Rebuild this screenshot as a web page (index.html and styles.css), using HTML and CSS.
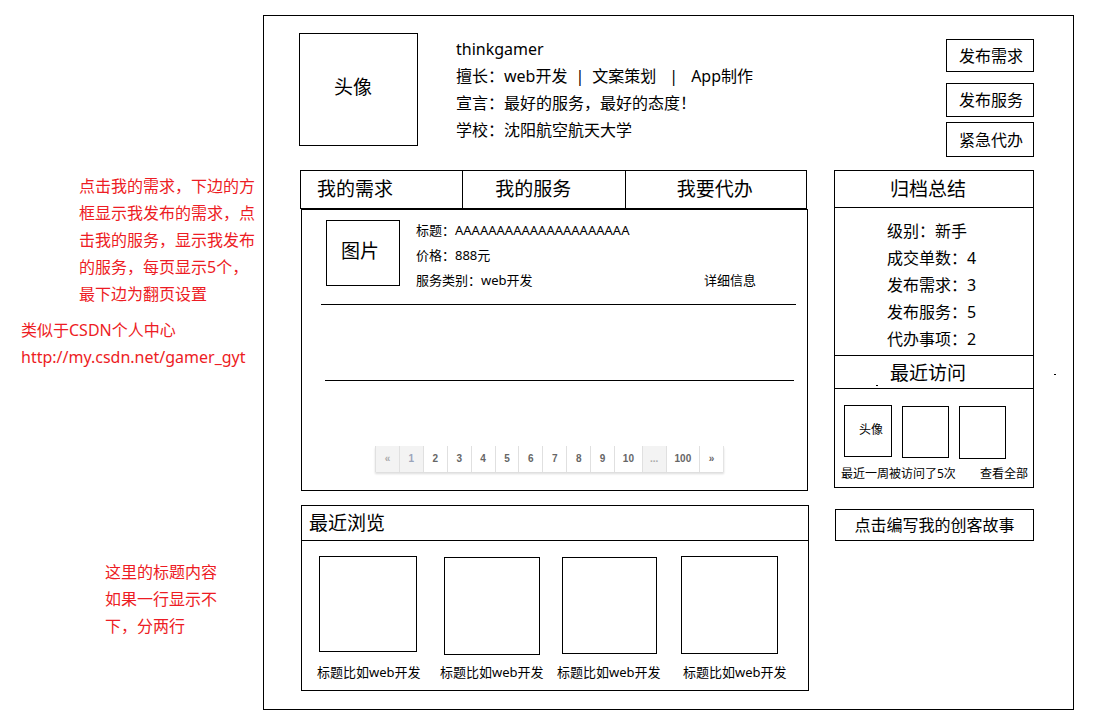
FILE: index.html
```html
<!DOCTYPE html>
<html lang="zh-CN">
<head>
<meta charset="utf-8">
<title>个人中心</title>
<link rel="stylesheet" href="styles.css">
</head>
<body>
<div class="page">
  <aside class="notes">
    <p class="note note-tabs">点击我的需求，下边的方框显示我发布的需求，点击我的服务，显示我发布的服务，每页显示5个，最下边为翻页设置</p>
    <p class="note note-link">类似于CSDN个人中心<br><a href="http://my.csdn.net/gamer_gyt">http://my.csdn.net/gamer_gyt</a></p>
    <p class="note note-title">这里的标题内容如果一行显示不下，分两行</p>
  </aside>
  <div class="frame">
    <header class="profile">
      <div class="avatar">头像</div>
      <div class="info">
        <p>thinkgamer</p>
        <p>擅长：web开发<span class="bar">|</span>文案策划<span class="bar bar-wide">|</span>App制作</p>
        <p>宣言：最好的服务，最好的态度！</p>
        <p>学校：沈阳航空航天大学</p>
      </div>
      <div class="actions">
        <button class="action action-first" type="button">发布需求</button>
        <button class="action" type="button">发布服务</button>
        <button class="action action-last" type="button">紧急代办</button>
      </div>
    </header>
    <div class="columns">
      <main class="main">
        <nav class="tabs">
          <button class="tab tab-needs" type="button">我的需求</button>
          <button class="tab tab-services" type="button">我的服务</button>
          <button class="tab tab-todo" type="button">我要代办</button>
        </nav>
        <section class="panel">
          <article class="item">
            <div class="picture">图片</div>
            <div class="item-text">
              <p>标题：AAAAAAAAAAAAAAAAAAAAA</p>
              <p>价格：888元</p>
              <p>服务类别：web开发</p>
            </div>
            <a class="detail" href="#detail">详细信息</a>
          </article>
          <div class="item-empty"></div>
          <nav class="pager" aria-label="翻页">
            <button class="pg off" type="button">«</button>
            <button class="pg off current" type="button">1</button>
            <button class="pg" type="button">2</button>
            <button class="pg" type="button">3</button>
            <button class="pg" type="button">4</button>
            <button class="pg" type="button">5</button>
            <button class="pg" type="button">6</button>
            <button class="pg" type="button">7</button>
            <button class="pg" type="button">8</button>
            <button class="pg" type="button">9</button>
            <button class="pg pg-ten" type="button">10</button>
            <button class="pg off" type="button">...</button>
            <button class="pg pg-hundred" type="button">100</button>
            <button class="pg" type="button">»</button>
          </nav>
        </section>
        <section class="recent">
          <h2 class="recent-title">最近浏览</h2>
          <div class="cards">
            <figure class="card"><div class="thumb thumb-a"></div><figcaption>标题比如web开发</figcaption></figure>
            <figure class="card"><div class="thumb thumb-b"></div><figcaption>标题比如web开发</figcaption></figure>
            <figure class="card"><div class="thumb thumb-c"></div><figcaption>标题比如web开发</figcaption></figure>
            <figure class="card"><div class="thumb thumb-d"></div><figcaption class="inset">标题比如web开发</figcaption></figure>
          </div>
        </section>
      </main>
      <aside class="side">
        <section class="summary">
          <h2 class="side-title">归档总结</h2>
          <div class="stats">
            <p>级别：新手</p>
            <p>成交单数：4</p>
            <p>发布需求：3</p>
            <p>发布服务：5</p>
            <p>代办事项：2</p>
          </div>
          <h2 class="side-title visits-title">最近访问<span class="dot dot-inner"></span></h2>
          <div class="visitors">
            <div class="visitor visitor-named">头像</div>
            <div class="visitor"></div>
            <div class="visitor visitor-tall"></div>
          </div>
          <div class="visit-foot"><span>最近一周被访问了5次</span><a href="#all">查看全部</a></div>
        </section>
        <button class="story" type="button">点击编写我的创客故事</button>
      </aside>
    </div>
    <span class="dot dot-outer"></span>
  </div>
</div>
</body>
</html>
```
FILE: styles.css
```css
* { box-sizing: border-box; }
body {
  margin: 0;
  background: #fff;
  color: #000;
  font: 16px/27px "Noto Sans", "Noto Sans CJK SC", sans-serif;
}
p, h2, figure { margin: 0; }
h2 { font-weight: 400; }
a { color: inherit; text-decoration: none; }
button {
  margin: 0;
  padding: 0;
  border: 1px solid #000;
  border-radius: 0;
  background: #fff;
  color: inherit;
  font: inherit;
  cursor: pointer;
}
.page {
  display: grid;
  grid-template-columns: 263px minmax(0, 1fr);
  padding: 15px 24px 10px 0;
}

/* Red annotations */
.notes { padding-top: 158px; color: #ed1c24; }
.note-tabs { width: 177px; margin-left: 79px; }
.note-link { margin: 9px 0 0 21px; }
.note-title { width: 113px; margin: 188px 0 0 105px; }

.frame {
  position: relative;
  border: 1px solid #000;
  padding: 17px 39px 18px 35px;
}

/* Profile header */
.profile { display: flex; align-items: flex-start; margin-bottom: 13px; }
.avatar {
  width: 119px;
  height: 113px;
  border: 1px solid #000;
  padding: 40px 0 0 34px;
  font-size: 19px;
}
.info { flex: 1; margin-left: 38px; padding-top: 3px; white-space: nowrap; }
.bar { margin: 0 8px; }
.bar-wide { margin: 0 13px; }
.actions {
  display: grid;
  grid-template-rows: 44px 39px 35px;
  align-items: start;
  width: 88px;
  padding-top: 6px;
}
.action { height: 34px; padding-left: 12px; line-height: 30px; text-align: left; }
.action-first { height: 33px; }
.action-last { height: 35px; }

.columns {
  display: grid;
  grid-template-columns: minmax(0, 1fr) 200px;
  column-gap: 25px;
  align-items: start;
  padding-left: 1px;
}

/* Tabs and list */
.tabs {
  display: grid;
  grid-template-columns: 162fr 163fr 182fr;
  height: 39px;
  margin-right: 2px;
  border: 1px solid #000;
}
.tab { border-width: 0 0 0 1px; text-align: left; font-size: 19px; }
.tab-needs { border-left: 0; padding-left: 16px; }
.tab-services { padding-left: 32px; }
.tab-todo { padding-left: 51px; }
.panel { margin: 0 1px; border: 1px solid #000; padding-bottom: 18px; }
.item {
  display: flex;
  margin: 0 11px 0 19px;
  padding: 8px 40px 11px 5px;
  border-bottom: 1px solid #000;
  font-size: 13px;
  line-height: 25px;
}
.picture {
  width: 74px;
  height: 66px;
  margin-top: 2px;
  border: 1px solid #000;
  padding: 18px 0 0 14px;
  font-size: 19px;
}
.item-text { flex: 1; margin-left: 16px; }
.detail { align-self: flex-end; }
.item-empty { height: 76px; margin: 0 13px 0 23px; border-bottom: 1px solid #000; }
.pager {
  display: flex;
  width: 349px;
  max-width: 80%;
  margin: 65px 0 0 73px;
  border-right: 1px solid #e4e4e4;
  box-shadow: 0 2px 2px #ddd;
}
.pg {
  flex: 24 1 0;
  height: 26px;
  border-width: 0 0 0 1px;
  border-color: #e0e0e0;
  color: #666;
  font: bold 10px/26px "Liberation Sans", sans-serif;
}
.pg-ten { flex-grow: 28; }
.pg-hundred { flex-grow: 34; }
.off { background: #f3f3f3; color: #aaa; }
.current { color: #9aa4bb; }

/* Recently viewed */
.recent { margin: 14px 0 0 1px; border: 1px solid #000; }
.recent-title {
  height: 35px;
  border-bottom: 1px solid #000;
  padding-left: 7px;
  font-size: 19px;
  line-height: 34px;
}
.cards {
  display: grid;
  grid-template-columns: 123fr 117fr 124fr 127fr;
  padding: 15px 0 8px 15px;
  font-size: 13px;
  line-height: 20px;
}
.card { display: grid; grid-template-rows: 106px auto; align-items: start; }
.thumb { border: 1px solid #000; }
.thumb-a { width: 98px; height: 96px; margin-left: 2px; }
.thumb-b { width: 96px; height: 98px; margin: 1px 0 0 4px; }
.thumb-c { width: 95px; height: 97px; margin: 1px 0 0 5px; }
.thumb-d { width: 97px; height: 98px; }
.inset { padding-left: 2px; }

/* Sidebar */
.summary { border: 1px solid #000; }
.side-title {
  position: relative;
  height: 38px;
  border-bottom: 1px solid #000;
  padding-left: 55px;
  font-size: 19px;
  line-height: 36px;
}
.side-title:first-child { height: 37px; }
.visits-title { height: 34px; border-top: 1px solid #000; line-height: 34px; }
.stats { padding: 10px 0 2px 52px; }
.visitors { display: flex; gap: 10px; height: 71px; padding: 16px 0 0 9px; font-size: 12px; }
.visitor { width: 47px; height: 52px; margin-top: 1px; border: 1px solid #000; }
.visitor-named { width: 48px; margin-top: 0; padding: 10px 0 0 14px; }
.visitor-tall { height: 53px; }
.visit-foot {
  display: flex;
  justify-content: space-between;
  padding: 1px 5px 0 6px;
  font-size: 12px;
  line-height: 26px;
}
.story { display: block; width: 199px; height: 32px; margin: 21px 0 0 1px; }

/* Stray pen marks */
.dot { position: absolute; width: 2px; height: 1px; background: #000; }
.dot-inner { left: 41px; bottom: 2px; }
.dot-outer { right: 17px; top: 358px; }
```
